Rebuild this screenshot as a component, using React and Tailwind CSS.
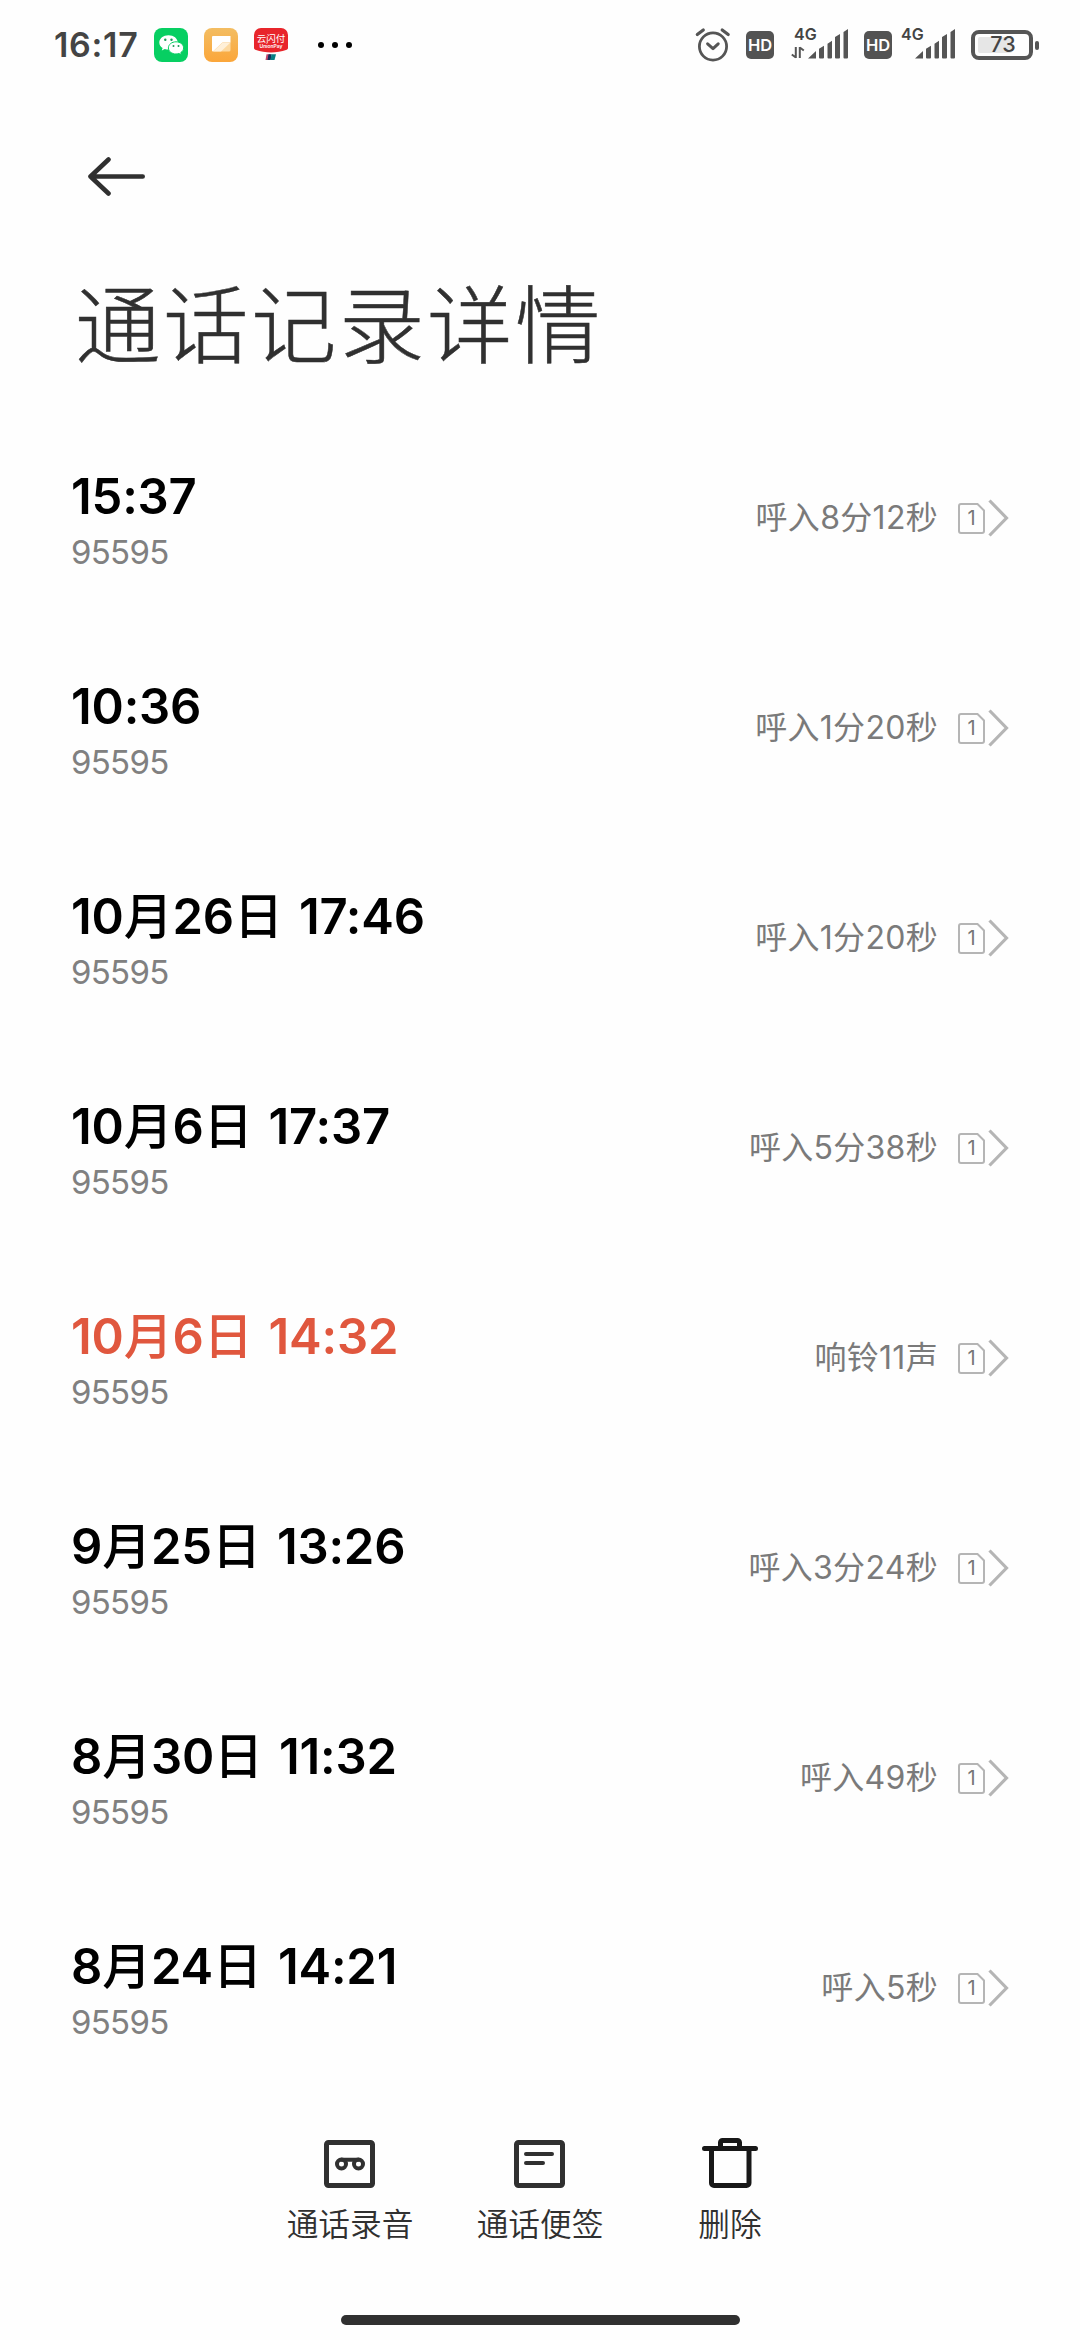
const calls = [
  { time: "15:37", info: "呼入8分12秒" },
  { time: "10:36", info: "呼入1分20秒" },
  { time: "10月26日 17:46", info: "呼入1分20秒" },
  { time: "10月6日 17:37", info: "呼入5分38秒" },
  { time: "10月6日 14:32", info: "响铃11声", missed: true },
  { time: "9月25日 13:26", info: "呼入3分24秒" },
  { time: "8月30日 11:32", info: "呼入49秒" },
  { time: "8月24日 14:21", info: "呼入5秒" },
];

function WeChatIcon() {
  return (
    <svg width="34" height="34" viewBox="0 0 34 34">
      <rect width="34" height="34" rx="8" fill="#07cf62" />
      <path d="M14.500 7.200c-5.200 0-9.200 3.200-9.200 7.200 0 2.300 1.300 4.200 3.300 5.500l-.8 2.600 3-1.500c1.200.4 2.400.6 3.700.6 5.200 0 9.200-3.200 9.200-7.200s-4-7.200-9.200-7.200z" fill="#fff" />
      <path d="M22 13.800c-4.200 0-7.600 2.700-7.600 6.100s3.400 6.100 7.600 6.100c1 0 2-.2 2.900-.5l2.500 1.300-.6-2.200c1.700-1.100 2.800-2.800 2.800-4.700 0-3.400-3.400-6.100-7.600-6.100z" fill="#fff" stroke="#07cf62" strokeWidth="1" />
      <g fill="#1d9a57">
        <circle cx="11.300" cy="11.800" r="1.200" /><circle cx="17.500" cy="11.800" r="1.200" />
        <circle cx="19.500" cy="18" r="1" /><circle cx="24.500" cy="18" r="1" />
      </g>
    </svg>
  );
}

function NotesIcon() {
  return (
    <svg width="34" height="34" viewBox="0 0 34 34">
      <defs>
        <linearGradient id="amber" x1="0" y1="0" x2="0" y2="1">
          <stop offset="0" stopColor="#f3bd62" /><stop offset="1" stopColor="#fba63a" />
        </linearGradient>
      </defs>
      <rect width="34" height="34" rx="8" fill="url(#amber)" />
      <path d="M26.500 14.500V22a1.500 1.500 0 0 1-1.500 1.500H9z" fill="#fdd9a0" />
      <path d="M9 8h17.500v6.500H19a1.500 1.500 0 0 0-1.200.5L9 23.500a1 1 0 0 1-1-1V9a1 1 0 0 1 1-1z" fill="#fff" />
      <path d="M26.500 14.500L17 23.500H9l8.800-8.500a1.500 1.500 0 0 1 1.200-.5z" fill="#fff0d8" />
    </svg>
  );
}

function UnionPayIcon() {
  return (
    <div className="relative h-[34px] w-[34px]">
      <svg width="34" height="34" viewBox="0 0 34 34">
        <path d="M7 0h20a7 7 0 0 1 7 7v13c0 1-1 1.800-2 2.100C28 23.500 22 24.500 17 24.500S6 23.500 2 22.100C1 21.800 0 21 0 20V7a7 7 0 0 1 7-7z" fill="#e8252b" />
        <path d="M12.500 26.300h4l-1 5.700h-4z" fill="#c2476c" />
        <path d="M14.500 26.300h3.200l-1 5.700h-3.200z" fill="#12305c" />
        <path d="M17.500 26.300H22l-1.500 5.700h-4z" fill="#087f83" />
      </svg>
      <div className="absolute inset-x-0 top-[5px] text-center text-[9.500px] leading-[11px] font-normal text-white">云闪付</div>
      <div className="absolute inset-x-0 top-[15px] text-center text-[5px] leading-[6px] font-semibold text-white">UnionPay</div>
    </div>
  );
}

function AlarmIcon() {
  return (
    <svg width="36" height="36" viewBox="0 0 36 36" fill="none" stroke="#555" strokeLinecap="round" strokeLinejoin="round">
      <circle cx="18" cy="19.500" r="13.600" strokeWidth="2.800" />
      <path d="M12.600 16.800l5.400 4.800 5.200-4.800" strokeWidth="3" />
      <path d="M2.300 7.500l6-4.600M27.200 2.900l6 4.600" strokeWidth="3.200" />
    </svg>
  );
}

function HdBadge() {
  return (
    <div className="flex h-[28px] w-[28px] items-center justify-center rounded-[5px] bg-[#535353] text-[16.500px] font-semibold leading-none text-white">
      <span>HD</span>
    </div>
  );
}

function Signal({ data }) {
  return (
    <div className={data ? "relative h-[34px] w-[57px]" : "relative h-[34px] w-[54px]"}>
      <svg className="absolute right-0 bottom-[3px]" width="40" height="30" viewBox="0 0 40 30" fill="#555">
        <path d="M0 29.500L8 22v7.500zM11 19.800l5-3v11.700a1 1 0 0 1-1 1h-3a1 1 0 0 1-1-1zM19.500 14.800l4.500-3v16.700a1 1 0 0 1-1 1h-2.500a1 1 0 0 1-1-1zM27 8l5-3v23.500a1 1 0 0 1-1 1h-3a1 1 0 0 1-1-1zM35.500 3l4.500-3v28.500a1 1 0 0 1-1 1h-2.500a1 1 0 0 1-1-1z" />
      </svg>
      {data && (
        <svg className="absolute bottom-[3px] left-0" width="14" height="13" viewBox="0 0 14 13" fill="none" stroke="#555" strokeWidth="2">
          <path d="M4.800 1v11M4.800 11.500L.8 8.500M8.800 12V1M8.800 1.500l4 3" />
        </svg>
      )}
      <span className={data ? "absolute top-0 left-[3px] text-[16px] leading-[12px] font-semibold text-[#444]" : "absolute top-0 left-0 text-[16px] leading-[12px] font-semibold text-[#444]"}>4G</span>
    </div>
  );
}

function Battery() {
  return (
    <div className="flex items-center gap-[2px]">
      <div className="flex h-[30px] w-[62px] items-center rounded-[8px] border-4 border-[#555] p-[3px]">
        <div className="relative flex h-full w-full items-center justify-center">
          <div className="absolute inset-y-0 left-0 w-[34px] rounded-[2px] bg-[#e6e6e6]" />
          <span className="relative left-[1px] text-[21.500px] leading-none font-medium text-[#444]">73</span>
        </div>
      </div>
      <div className="h-[9px] w-[4px] rounded-[2px] bg-[#555]" />
    </div>
  );
}

function StatusBar() {
  return (
    <header className="flex h-[90px] items-center pr-[41px] pl-[54px]">
      <span className="w-[100px] text-[34px] leading-none font-[560] tracking-[0.700px] text-[#444]">16:17</span>
      <div className="flex gap-4"><WeChatIcon /><NotesIcon /><UnionPayIcon /></div>
      <div className="ml-[30px] flex gap-2">
        <i className="size-[6px] rounded-full bg-black" /><i className="size-[6px] rounded-full bg-black" /><i className="size-[6px] rounded-full bg-black" />
      </div>
      <div className="ml-auto flex items-center">
        <AlarmIcon />
        <div className="ml-[15px]"><HdBadge /></div>
        <div className="ml-[17px]"><Signal data /></div>
        <div className="ml-[16px]"><HdBadge /></div>
        <div className="ml-[9px]"><Signal /></div>
        <div className="ml-[16px]"><Battery /></div>
      </div>
    </header>
  );
}

function CallTime({ text }) {
  return text.split(/([月日])/).map((part, i) =>
    /[月日]/.test(part) ? <span key={i} className="font-medium">{part}</span> : <span key={i}>{part}</span>
  );
}

function CallRow({ call }) {
  return (
    <li className="flex h-[210px] items-center justify-between pr-[71px] pl-[71px]">
      <div className="pt-[2px]">
        <div className={call.missed ? "text-[49px] leading-[60px] font-[560] tracking-[-0.200px] whitespace-pre [word-spacing:4px] text-[#e0573e]" : "text-[49px] leading-[60px] font-[560] tracking-[-0.200px] whitespace-pre [word-spacing:4px] text-black"}><CallTime text={call.time} /></div>
        <div className="mt-[5px] text-[33px] leading-[40px] tracking-[-0.700px] text-[#808080]">95595</div>
      </div>
      <div className="flex items-center">
        <span className="text-[32px] leading-10 tracking-[0.300px] text-[#7a7a7a]">{call.info}</span>
        <div className="relative ml-[20px] h-[31px] w-[27px]">
          <svg width="27" height="31" viewBox="0 0 27 31" fill="none" stroke="#b5b5b5" strokeWidth="2">
            <path d="M3 1h16.500L26 7.500V28a2 2 0 0 1-2 2H3a2 2 0 0 1-2-2V3A2 2 0 0 1 3 1z" />
          </svg>
          <span className="absolute inset-0 text-center text-[20px] leading-[31px] text-[#777]">1</span>
        </div>
        <svg className="ml-[3px]" width="21" height="38" viewBox="0 0 21 38" fill="none" stroke="#b5b5b5" strokeWidth="3.200">
          <path d="M1.500 1.500L18.500 19 1.500 36.500" />
        </svg>
      </div>
    </li>
  );
}

function Action({ label, children }) {
  return (
    <button className="flex w-[190px] flex-col items-center">
      <svg width="60" height="56" viewBox="0 0 60 56" fill="none" stroke="#303030" strokeWidth="5" strokeLinecap="round" strokeLinejoin="round">{children}</svg>
      <span className="mt-[12px] text-[31.700px] leading-[46px] font-[350] text-[#303030]">{label}</span>
    </button>
  );
}

export default function App() {
  return (
    <div className="flex h-[2340px] w-[1080px] flex-col overflow-hidden bg-[#fefefe] font-['Inter','Noto_Sans_CJK_SC',sans-serif]">
      <StatusBar />
      <nav className="flex h-[172px] items-start pt-[66px] pl-[86px]">
        <svg width="62" height="40" viewBox="0 0 62 40" fill="none" stroke="#303030" strokeWidth="4.600" strokeLinecap="round" strokeLinejoin="round">
          <path d="M56.700 20.500H4.500M22.500 3.500L4.500 20.500 22.500 37.500" />
        </svg>
      </nav>
      <h1 className="h-[151px] pt-[4px] pl-[75px] text-[85.500px] leading-[120px] font-light tracking-[2.500px] text-[#303030] [-webkit-text-stroke:0.500px_#303030]">通话记录详情</h1>
      <ul className="h-[1680px]">
        {calls.map((call) => <CallRow key={call.time} call={call} />)}
      </ul>
      <footer className="flex h-[222px] justify-center pt-[41px]">
        <Action label="通话录音">
          <rect x="6.500" y="8.500" width="46" height="43" rx="2" />
          <circle cx="21.500" cy="30" r="4.500" strokeWidth="4" /><circle cx="38.500" cy="30" r="4.500" strokeWidth="4" />
          <path d="M21.500 25.700h17" strokeWidth="4" />
        </Action>
        <Action label="通话便签">
          <rect x="6.500" y="8.500" width="46" height="43" rx="2" />
          <path d="M16 20h26M16 29h17" strokeWidth="4" />
        </Action>
        <Action label="删除">
          <path d="M4.500 14.500h51M11.500 14.500V49a2.500 2.500 0 0 0 2.500 2.500h32.500A2.500 2.500 0 0 0 49 49V14.500M20.500 14V8.500a2 2 0 0 1 2-2h15a2 2 0 0 1 2 2V14" stroke="#181818" />
        </Action>
      </footer>
      <div className="mx-auto h-[10px] w-[399px] rounded-full bg-[#303030]" />
    </div>
  );
}
